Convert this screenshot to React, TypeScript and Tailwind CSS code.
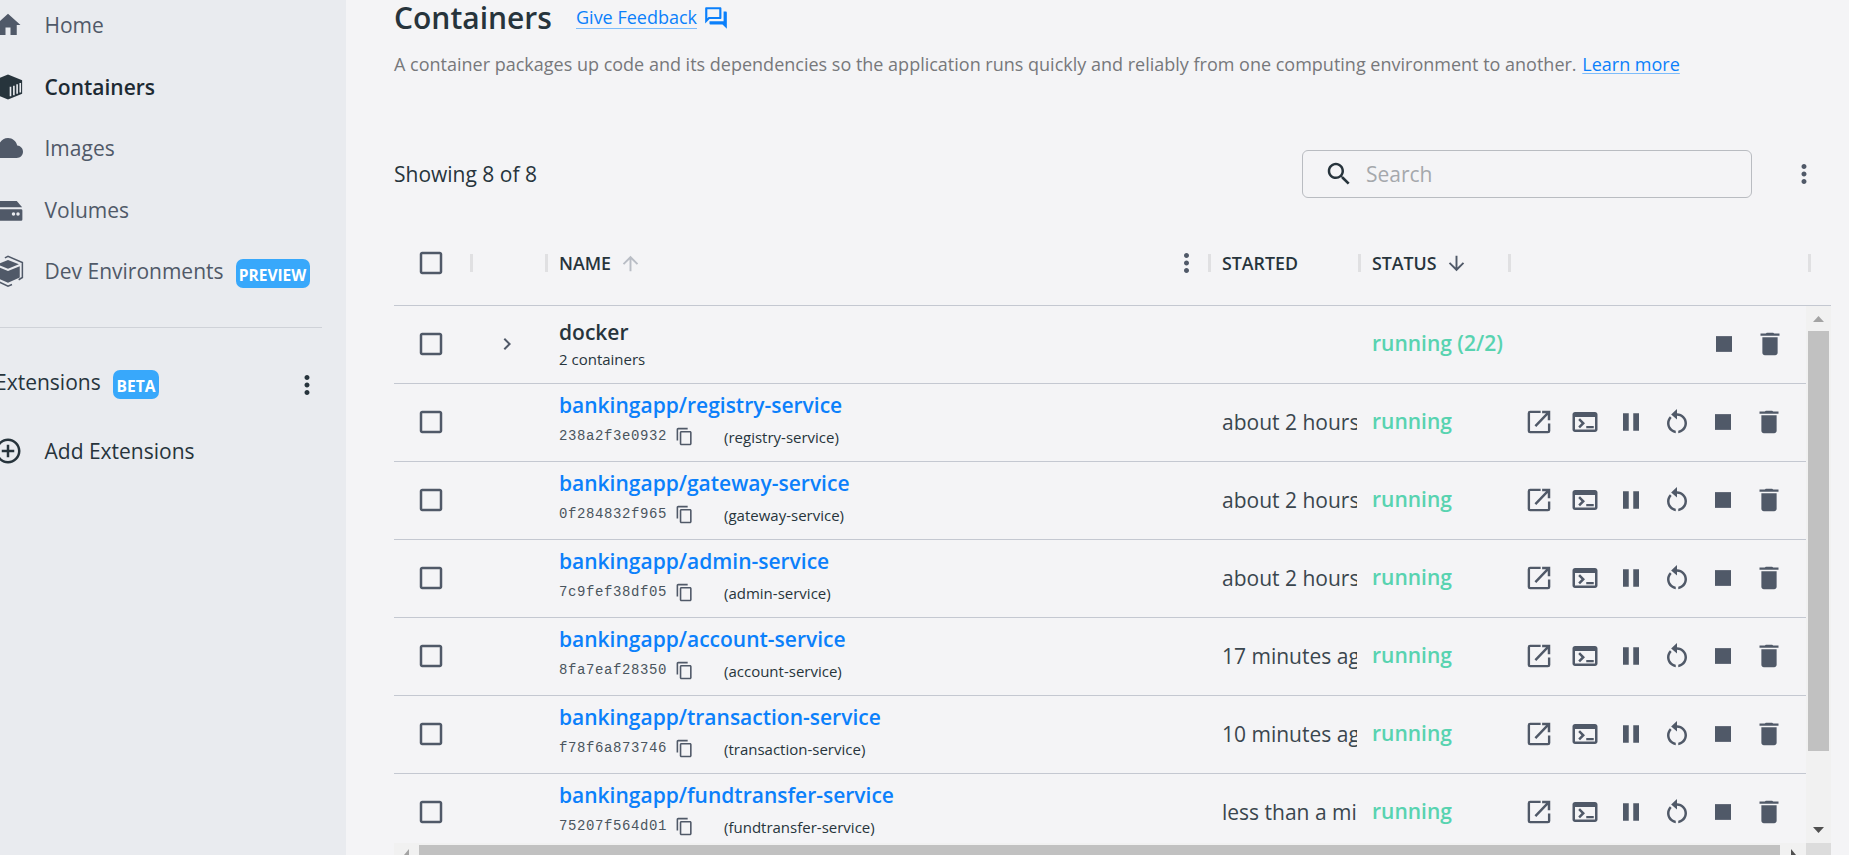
import React from "react";

type P = { className?: string };

const Svg = ({ children, className = "" }: { children: React.ReactNode; className?: string }) => (
  <svg viewBox="0 0 24 24" className={`h-[30px] w-[30px] shrink-0 ${className}`} fill="currentColor">
    {children}
  </svg>
);

const HomeIcon = () => (
  <Svg><path d="M10 20v-6h4v6h5v-8h3L12 3 2 12h3v8z" /></Svg>
);
const ContainerIcon = () => (
  <Svg className="text-[#27343c]">
    <path d="M12 2 23.300 6.600v10.800L12 22 .7 17.400V6.600z" />
    <path d="M14 11.800v7.600M16.700 10.900v7.600M19.300 9.800v7.600M21.800 8.700v7.600" stroke="#e9ebef" strokeWidth="1.300" />
  </Svg>
);
const CloudIcon = () => (
  <Svg><path d="M19.350 10.040C18.670 6.590 15.640 4 12 4 9.110 4 6.600 5.640 5.350 8.040 2.340 8.360 0 10.910 0 14c0 3.310 2.690 6 6 6h13c2.760 0 5-2.240 5-5 0-2.640-2.050-4.780-4.650-4.960z" /></Svg>
);
const VolumeIcon = () => (
  <Svg>
    <path d="M5 4.800h14l4.300 5H.7z" />
    <path fillRule="evenodd" d="M1.500 11.300h21a1 1 0 0 1 1 1v7.200a1 1 0 0 1-1 1h-21a1 1 0 0 1-1-1v-7.200a1 1 0 0 1 1-1zM16.400 13.700a1.400 1.400 0 1 0 0 2.800 1.400 1.400 0 0 0 0-2.800zM20 13.700a1.400 1.400 0 1 0 0 2.800 1.400 1.400 0 0 0 0-2.800z" />
  </Svg>
);
const DevIcon = () => (
  <Svg className="overflow-visible">
    <path d="M12 3.200 20.700 6.600 12 10.200 3.300 6.600z" />
    <path d="M2.600 8.200 12 12l9.400-3.800v9L12 21.300l-9.400-4.100z" />
    <path d="M9.500 1.500 12 .3l11.500 4.900v12L20.500 19M15.200 22.800 12 24.100.5 18.800V6.500L3.500 4.600" fill="none" stroke="currentColor" strokeWidth="1.200" />
  </Svg>
);
const AddIcon = () => (
  <Svg><path d="M13 7h-2v4H7v2h4v4h2v-4h4v-2h-4V7zm-1-5C6.480 2 2 6.480 2 12s4.480 10 10 10 10-4.480 10-10S17.520 2 12 2zm0 18c-4.410 0-8-3.590-8-8s3.590-8 8-8 8 3.590 8 8-3.590 8-8 8z" /></Svg>
);
const Kebab = ({ className = "" }: P) => (
  <Svg className={className}><path d="M12 8c1.100 0 2-.9 2-2s-.9-2-2-2-2 .9-2 2 .9 2 2 2zm0 2c-1.100 0-2 .9-2 2s.9 2 2 2 2-.9 2-2-.9-2-2-2zm0 6c-1.100 0-2 .9-2 2s.9 2 2 2 2-.9 2-2-.9-2-2-2z" /></Svg>
);
const FeedbackIcon = () => (
  <svg viewBox="0 0 24 24" className="h-[26px] w-[26px] shrink-0" fill="currentColor">
    <path d="M15 4v7H5.170L4 12.170V4h11m1-2H3c-.55 0-1 .45-1 1v14l4-4h10c.55 0 1-.45 1-1V3c0-.55-.45-1-1-1zm5 4h-2v9H6v2c0 .55.45 1 1 1h11l4 4V7c0-.55-.45-1-1-1z" />
  </svg>
);
const SearchIcon = () => (
  <Svg className="text-[#27343c]"><path d="M15.500 14h-.79l-.28-.27C15.410 12.590 16 11.110 16 9.500 16 5.910 13.090 3 9.500 3S3 5.910 3 9.500 5.910 16 9.500 16c1.610 0 3.090-.59 4.230-1.570l.27.28v.79l5 4.990L20.490 19l-4.990-5zm-6 0C7.010 14 5 11.990 5 9.500S7.010 5 9.500 5 14 7.010 14 9.500 11.990 14 9.500 14z" /></Svg>
);
const Checkbox = () => (
  <Svg><path d="M19 5v14H5V5h14m0-2H5c-1.100 0-2 .9-2 2v14c0 1.100.9 2 2 2h14c1.100 0 2-.9 2-2V5c0-1.100-.9-2-2-2z" /></Svg>
);
const Arrow = ({ className = "" }: P) => (
  <svg viewBox="0 0 24 24" className={`h-[23px] w-[23px] shrink-0 ${className}`} fill="currentColor">
    <path d="M4 12l1.410 1.410L11 7.830V20h2V7.830l5.580 5.590L20 12l-8-8-8 8z" />
  </svg>
);
const OpenIcon = () => (
  <Svg>
    <path d="M13.300 3.900H4.900a1 1 0 0 0-1 1v14.200a1 1 0 0 0 1 1h14.200a1 1 0 0 0 1-1v-6" fill="none" stroke="currentColor" strokeWidth="1.900" />
    <path d="M14.500 3H21v7.500h-2V6.400L9.800 16 8.400 14.600 17.600 5h-3.100z" />
  </Svg>
);
const TerminalIcon = () => (
  <Svg><path d="M20 4H4c-1.110 0-2 .9-2 2v12c0 1.100.89 2 2 2h16c1.100 0 2-.9 2-2V6c0-1.100-.89-2-2-2zm0 14H4V8h16v10zm-1-1h-6v-1.800h6v1.800zM8 17l-1.410-1.410L9.170 13l-2.590-2.590L8 9l4 4-4 4z" /></Svg>
);
const PauseIcon = () => (
  <Svg><path d="M5.600 5h4.600v14H5.600zM13.800 5h4.600v14h-4.600z" /></Svg>
);
const RestartIcon = () => (
  <Svg><path d="M12 5V1.500L7.300 6 12 10V7c3.310 0 6 2.690 6 6 0 2.970-2.170 5.430-5 5.910v2.020c3.950-.49 7-3.850 7-7.930 0-4.420-3.580-8-8-8zM6 13c0-1.650.67-3.150 1.760-4.240L6.340 7.340C4.900 8.790 4 10.790 4 13c0 4.080 3.050 7.440 7 7.930v-2.020c-2.830-.48-5-2.940-5-5.910z" /></Svg>
);
const StopIcon = () => (
  <Svg><path d="M5.600 5.700h12.800v12.600H5.600z" /></Svg>
);
const TrashIcon = () => (
  <Svg><path d="M5.900 19c0 1.100.9 2 2 2h8.200c1.100 0 2-.9 2-2V6.600H5.900V19zM19.600 3.600h-4.200L14.500 2.900h-5l-.9.700H4.400v1.800h15.200z" /></Svg>
);
const CopyIcon = () => (
  <svg viewBox="0 0 24 24" className="h-[19px] w-[19px] shrink-0 text-[#505968]" fill="currentColor">
    <path d="M16 1H4c-1.100 0-2 .9-2 2v14h2V3h12V1zm3 4H8c-1.100 0-2 .9-2 2v14c0 1.100.9 2 2 2h11c1.100 0 2-.9 2-2V7c0-1.100-.9-2-2-2zm0 16H8V7h11v14z" />
  </svg>
);

const nav = [
  { label: "Home", icon: <HomeIcon /> },
  { label: "Containers", icon: <ContainerIcon />, active: true },
  { label: "Images", icon: <CloudIcon /> },
  { label: "Volumes", icon: <VolumeIcon /> },
  { label: "Dev Environments", icon: <DevIcon />, badge: "PREVIEW" },
];

const rows = [
  { name: "registry-service", id: "238a2f3e0932", started: "about 2 hours ago" },
  { name: "gateway-service", id: "0f284832f965", started: "about 2 hours ago" },
  { name: "admin-service", id: "7c9fef38df05", started: "about 2 hours ago" },
  { name: "account-service", id: "8fa7eaf28350", started: "17 minutes ago" },
  { name: "transaction-service", id: "f78f6a873746", started: "10 minutes ago" },
  { name: "fundtransfer-service", id: "75207f564d01", started: "less than a minute ago" },
];

const Badge = ({ children, className = "" }: { children: string; className?: string }) => (
  <span className={`flex h-[29px] items-center justify-center rounded-[7px] bg-[#38a8fb] pt-[2px] text-[15.500px] font-bold text-white ${className}`}>
    {children}
  </span>
);

const Sidebar = () => (
  <aside className="w-[346px] shrink-0 overflow-hidden bg-[#e9ebef] text-[#505968]">
    <nav className="-mt-[5.5px]">
      {nav.map((n) => (
        <div key={n.label} className="flex h-[61.5px] items-center">
          <span className="-ml-[7.500px] mr-[22px] shrink-0">{n.icon}</span>
          <span className={n.active ? "font-semibold text-[#1d2a33]" : ""}>{n.label}</span>
          {n.badge && <Badge className="ml-[12px] mt-[5px] w-[74px]">{n.badge}</Badge>}
        </div>
      ))}
    </nav>
    <div className="mt-[25px] h-px w-[322px] bg-[#cfd2d8]" />
    <div className="mt-[41px] flex h-[31px] items-center text-[#27343c]">
      <span className="-ml-[5px] mt-[-5px] w-[105px]">Extensions</span>
      <Badge className="ml-[13px] w-[46px]">BETA</Badge>
      <Kebab className="ml-[132.500px]" />
    </div>
    <div className="mt-[36px] flex h-[30px] items-center text-[#27343c]">
      <span className="-ml-[7.500px] mr-[22px] shrink-0"><AddIcon /></span>
      <span>Add Extensions</span>
    </div>
  </aside>
);

const COLS = "grid grid-cols-[78px_75px_663px_150px_150px_300px]";

const Sep = () => <i className="-mr-[1px] ml-auto h-[18px] w-[3px] shrink-0 bg-[#e0e0e2]" />;

const HeaderRow = () => (
  <div className={`${COLS} mt-[22px] h-[86px] w-[1437px] border-b border-[#c4c8d1] pt-px text-[17.800px] font-semibold text-[#27343c]`}>
    <div className="flex items-center pl-[22px] text-[#505968]"><Checkbox /><Sep /></div>
    <div className="flex items-center"><Sep /></div>
    <div className="flex items-center pl-[12px]">
      NAME<Arrow className="ml-[8px] text-[#b9bdc5]" />
      <Kebab className="ml-auto mr-[8px] -translate-x-[-1.500px] text-[#505968] [height:26px] [width:26px]" />
      <i className="-mr-[1px] h-[18px] w-[3px] shrink-0 bg-[#e0e0e2]" />
    </div>
    <div className="flex items-center pl-[12px]">STARTED<Sep /></div>
    <div className="flex items-center pl-[12px]">STATUS<Arrow className="ml-[8px] rotate-180 text-[#505968]" /><Sep /></div>
    <div className="flex items-center"><Sep /></div>
  </div>
);

const Row = ({ children }: { children: React.ReactNode }) => (
  <div className={`${COLS} h-[78px] border-b border-[#c4c8d1]`}>{children}</div>
);

const Table = () => (
  <div className="flex w-[1437px]">
    <div className="h-[549px] w-[1412px] shrink-0 overflow-hidden">
      <div className="h-[537px] overflow-hidden">
        <Row>
          <div className="flex items-center pb-px pl-[22px] text-[#505968]"><Checkbox /></div>
          <div className="flex items-center pb-px pl-[23px] text-[#505968]">
            <svg viewBox="0 0 24 24" className="h-[24px] w-[24px]" fill="currentColor"><path d="M10 6 8.590 7.410 13.170 12l-4.580 4.590L10 18l6-6z" /></svg>
          </div>
          <div className="flex flex-col pl-[12px] pt-[12px] text-[#27343c]">
            <span className="font-semibold leading-[28px]">docker</span>
            <span className="text-[15px] leading-[26px]">2 containers</span>
          </div>
          <div />
          <div className="flex items-center whitespace-nowrap pb-[3px] pl-[12px] font-semibold text-[#58d3b0]">running (2/2)</div>
          <div className="flex items-center justify-end gap-[16px] pb-px pr-[25.500px] text-[#505968]"><StopIcon /><TrashIcon /></div>
        </Row>
        {rows.map((r) => (
          <Row key={r.id}>
            <div className="flex items-center pb-px pl-[22px] text-[#505968]"><Checkbox /></div>
            <div />
            <div className="flex flex-col pl-[12px] pt-[7px]">
              <a className="font-semibold leading-[28px] text-[#0b80fb]">bankingapp/{r.name}</a>
              <div className="flex h-[34px] items-center text-[#27343c]">
                <span className="w-[116px] font-['Liberation_Mono',monospace] text-[14px] tracking-[0.600px] text-[#4a555e]">{r.id}</span>
                <CopyIcon />
                <span className="ml-[30px] mt-px text-[15px]">({r.name})</span>
              </div>
            </div>
            <div className="flex items-center pb-px pl-[12px]"><span className="w-[135px] overflow-hidden whitespace-nowrap text-[#3a464e]">{r.started}</span></div>
            <div className="flex items-center pb-[3px] pl-[12px] font-semibold text-[#58d3b0]">running</div>
            <div className="flex items-center gap-[16px] pb-px pl-[14px] text-[#505968]">
              <OpenIcon /><TerminalIcon /><PauseIcon /><RestartIcon /><StopIcon /><TrashIcon />
            </div>
          </Row>
        ))}
      </div>
      <div className="flex h-[12px] bg-[#f1f1f1]">
        <svg viewBox="0 0 25 12" className="h-[12px] w-[25px]"><path d="M15 6v6h-5z" fill="#a3a3a3" /></svg>
        <div className="mt-[2px] h-[10px] w-[1361px] bg-[#c1c1c1]" />
        <svg viewBox="0 0 26 12" className="h-[12px] w-[26px]"><path d="M11 6v6h5z" fill="#505050" /></svg>
      </div>
    </div>
    <div className="flex h-[549px] w-[25px] flex-col items-center bg-[#f1f1f1]">
      <svg viewBox="0 0 25 25" className="h-[25px] w-[25px] shrink-0"><path d="M7 16h11l-5.500-6z" fill="#a3a3a3" /></svg>
      <div className="h-[420px] w-[21px] bg-[#c1c1c1]" />
      <svg viewBox="0 0 25 25" className="mt-auto h-[25px] w-[25px] shrink-0"><path d="M7 9h11l-5.500 6z" fill="#505050" /></svg>
      <div className="h-[12px] w-[25px] shrink-0 bg-[#dcdcdc]" />
    </div>
  </div>
);

export default function App() {
  return (
    <div className="flex h-[855px] w-[1849px] overflow-hidden bg-[#f4f4f6] font-['Open_Sans',sans-serif] text-[21px] leading-[28px]">
      <Sidebar />
      <main className="min-w-0 flex-1 pl-[48px]">
        <div className="flex h-[36px] items-center">
          <h1 className="w-[182px] text-[30px] font-semibold leading-[36px] text-[#27343c]">Containers</h1>
          <a className="border-b border-[#7dbcfb] text-[18px] leading-[21px] text-[#0b80fb]">Give Feedback</a>
          <span className="ml-[6px] text-[#0b80fb]"><FeedbackIcon /></span>
        </div>
        <p className="mt-[14px] h-[28px] whitespace-nowrap text-[18px] text-[#77787b]">
          A container packages up code and its dependencies so the application runs quickly and reliably from one computing environment to another.{" "}
          <a className="ml-px text-[#0b80fb] underline decoration-[#7dbcfb] decoration-1 underline-offset-2">Learn more</a>
        </p>
        <div className="mt-[72px] flex h-[48px] items-center text-[#27343c]">
          <span className="w-[908px] pb-px">Showing 8 of 8</span>
          <div className="flex h-[48px] w-[450px] items-center rounded-[6px] border border-[#b9bcc1] pl-[20.500px]">
            <SearchIcon />
            <span className="ml-[12.500px] text-[#a5a8ac]">Search</span>
          </div>
          <Kebab className="ml-[36.500px] text-[#505968]" />
        </div>
        <HeaderRow />
        <Table />
      </main>
    </div>
  );
}
